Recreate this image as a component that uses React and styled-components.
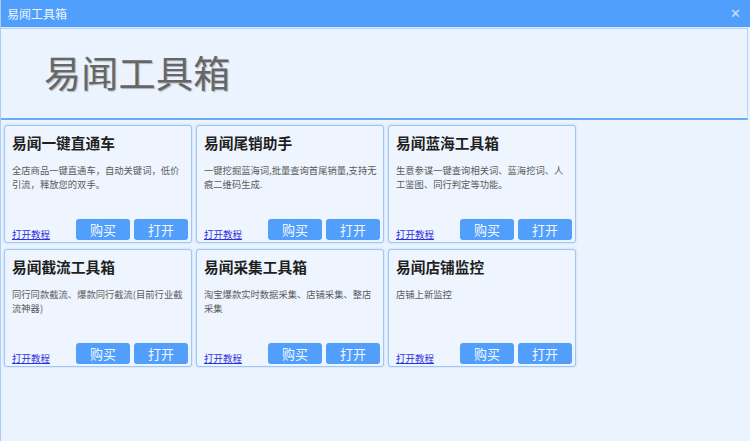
import React from "react";
import styled, { createGlobalStyle } from "styled-components";

const GlobalStyle = createGlobalStyle`
  html, body {
    margin: 0;
    padding: 0;
    background: #ebf3fe;
  }
  body {
    font-family: "Noto Sans CJK SC", "Noto Sans", sans-serif;
  }
`;

const Window = styled.div`
  width: 750px;
  height: 441px;
  display: flex;
  flex-direction: column;
  background: #ebf3fe;
  box-sizing: border-box;
  border-left: 1px solid #a9cdf5;
  overflow: hidden;
`;

const TitleBar = styled.div`
  height: 27px;
  flex-shrink: 0;
  background: #519ffd;
  display: flex;
  align-items: center;
  justify-content: space-between;
  padding: 0 9px 0 6px;
  color: #eaf3ff;
  font-size: 12px;
  border-bottom: 1px solid #dbeaff;
`;

const CloseButton = styled.span`
  font-size: 13px;
  line-height: 1;
  color: #cfe3ff;
  font-family: "DejaVu Sans", sans-serif;
`;

const Header = styled.div`
  height: 92px;
  flex-shrink: 0;
  margin-right: 2px;
  border: 1px solid #b7d5f8;
  border-left: none;
  border-bottom: 2px solid #6cabf6;
  display: flex;
  align-items: center;
  padding-left: 43px;
  padding-bottom: 4px;
  box-sizing: border-box;
  font-size: 37px;
  color: #666666;
  text-shadow: 1px 1px 1px rgba(60, 60, 60, 0.35);
  letter-spacing: 0.3px;
`;

const Grid = styled.div`
  display: grid;
  grid-template-columns: repeat(3, 188px);
  grid-auto-rows: 118px;
  gap: 6px 4px;
  padding: 5px 3px;
`;

const Card = styled.div`
  box-sizing: border-box;
  border: 1px solid #9fc7f6;
  border-radius: 3px;
  box-shadow: 0 0 2px rgba(90, 160, 245, 0.45);
  background: #eef5fe;
  padding: 7px 3px 2px 7px;
  display: flex;
  flex-direction: column;
`;

const CardTitle = styled.div`
  font-size: 14.7px;
  font-weight: bold;
  color: #1f1f1f;
  line-height: 20px;
`;

const CardDesc = styled.div`
  margin-top: 10px;
  font-size: 9.3px;
  line-height: 14px;
  color: #5a5a5a;
  flex: 1;
`;

const DescLine = styled.div`
  white-space: nowrap;
`;

const CardFooter = styled.div`
  display: flex;
  align-items: flex-end;
  gap: 4px;
`;

const Tutorial = styled.a`
  font-size: 9.5px;
  color: #3030dc;
  text-decoration: underline;
  margin-right: auto;
  line-height: 12px;
  cursor: pointer;
`;

const ActionButton = styled.button`
  width: 54px;
  height: 21px;
  border: none;
  border-radius: 3px;
  background: #519ffb;
  color: #f2f7ff;
  font-family: inherit;
  font-size: 13px;
  padding: 0;
  line-height: 21px;
  cursor: pointer;
`;

const tools = [
  { name: "易闻一键直通车", desc: ["全店商品一键直通车，自动关键词，低价", "引流，释放您的双手。"] },
  { name: "易闻尾销助手", desc: ["一键挖掘蓝海词,批量查询首尾销量,支持无", "痕二维码生成."] },
  { name: "易闻蓝海工具箱", desc: ["生意参谋一键查询相关词、蓝海挖词、人", "工鉴图、同行判定等功能。"] },
  { name: "易闻截流工具箱", desc: ["同行同款截流、爆款同行截流(目前行业截", "流神器)"] },
  { name: "易闻采集工具箱", desc: ["淘宝爆款实时数据采集、店铺采集、整店", "采集"] },
  { name: "易闻店铺监控", desc: ["店铺上新监控"] },
];

export default function App() {
  return (
    <>
      <GlobalStyle />
      <Window>
        <TitleBar>
          <span>易闻工具箱</span>
          <CloseButton>✕</CloseButton>
        </TitleBar>
        <Header>易闻工具箱</Header>
        <Grid>
          {tools.map((tool) => (
            <Card key={tool.name}>
              <CardTitle>{tool.name}</CardTitle>
              <CardDesc>
                {tool.desc.map((line) => (
                  <DescLine key={line}>{line}</DescLine>
                ))}
              </CardDesc>
              <CardFooter>
                <Tutorial>打开教程</Tutorial>
                <ActionButton>购买</ActionButton>
                <ActionButton>打开</ActionButton>
              </CardFooter>
            </Card>
          ))}
        </Grid>
      </Window>
    </>
  );
}
